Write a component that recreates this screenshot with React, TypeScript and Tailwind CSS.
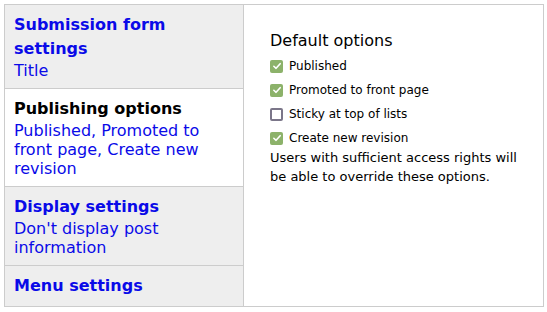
import React from "react";

const tabs = [
  { title: "Submission form settings", summary: "Title", active: false },
  { title: "Publishing options", summary: "Published, Promoted to front page, Create new revision", active: true },
  { title: "Display settings", summary: "Don't display post information", active: false },
  { title: "Menu settings", summary: "", active: false },
];

const options = [
  { label: "Published", checked: true },
  { label: "Promoted to front page", checked: true },
  { label: "Sticky at top of lists", checked: false },
  { label: "Create new revision", checked: true },
];

const Checkbox = ({ checked }: { checked: boolean }) =>
  checked ? (
    <span className="w-[13px] h-[13px] rounded-[2px] bg-[#8cb26a] flex items-center justify-center shrink-0">
      <svg viewBox="0 0 12 12" className="w-[10px] h-[10px]">
        <path d="M2.2 6.3 L4.9 8.8 L9.8 3.2" fill="none" stroke="#ffffff" strokeWidth="1.9" strokeLinecap="round" strokeLinejoin="round" />
      </svg>
    </span>
  ) : (
    <span className="w-[13px] h-[13px] rounded-[2px] border-2 border-[#7b7689] bg-white shrink-0" />
  );

export default function App() {
  return (
    <div className="w-[547px] h-[312px] bg-white pl-1 pt-1 font-['DejaVu_Sans',sans-serif]">
      <div className="flex w-[540px] h-[303px] border border-[#cccccc] bg-[#eeeeee] overflow-hidden">
        <ul className="w-[239px] shrink-0 flex flex-col">
          {tabs.map((tab, i) => (
            <li
              key={tab.title}
              className={`pl-[9px] pr-3 pt-[8px] pb-[8px] border-[#cccccc] ${i > 0 ? "border-t" : ""} ${
                tab.active ? "bg-white" : "bg-[#eeeeee] border-r"
              }`}
            >
              <div className={`text-[16px] font-bold leading-[24px] ${tab.active ? "text-black" : "text-[#0a0ae8]"}`}>
                {tab.title}
              </div>
              {tab.summary && (
                <div className="text-[16px] leading-[19px] text-[#0a0ae8]">{tab.summary}</div>
              )}
            </li>
          ))}
          <li className="flex-1 border-r border-[#cccccc]" />
        </ul>
        <div className="flex-1 bg-white border-l border-[#cccccc] -ml-px pl-[26px] pt-[25px] pr-6">
          <h3 className="text-[16px] leading-[22px] text-black">Default options</h3>
          <div className="mt-[2px] flex flex-col">
            {options.map((o) => (
              <label key={o.label} className="flex items-center gap-[6px] h-[24px] text-[12px] text-black">
                <Checkbox checked={o.checked} />
                <span>{o.label}</span>
              </label>
            ))}
          </div>
          <p className="-mt-[2px] text-[13px] leading-[19px] text-black w-[250px]">
            Users with sufficient access rights will be able to override these options.
          </p>
        </div>
      </div>
    </div>
  );
}
